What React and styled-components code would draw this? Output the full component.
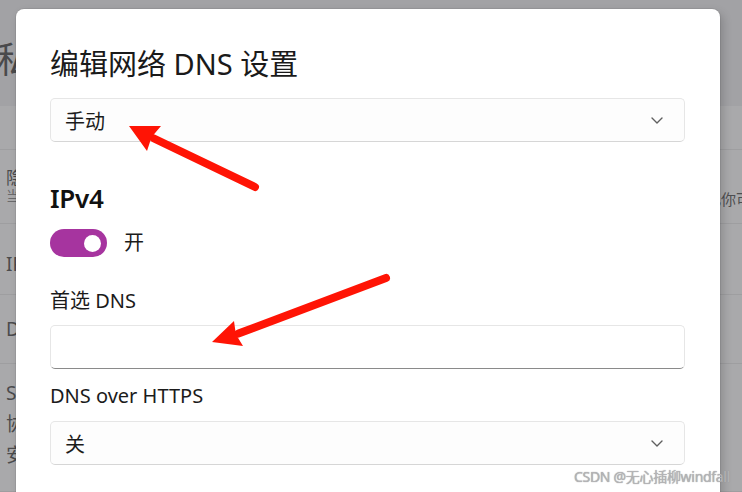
import React from 'react';
import styled, { createGlobalStyle } from 'styled-components';

const GlobalStyle = createGlobalStyle`
  html, body {
    margin: 0;
    padding: 0;
    background: #a3a3a5;
  }
  body {
    font-family: "Noto Sans", "Noto Sans CJK SC", sans-serif;
    color: #1b1b1b;
  }
`;

const Screen = styled.div`
  position: relative;
  width: 742px;
  height: 492px;
  overflow: hidden;
  background: #a2a2a5;
`;

/* settings page dimmed behind the dialog */
const Page = styled.div`
  display: flex;
  flex-direction: column;
  height: 100%;
`;

const PageHeader = styled.div`
  height: 107px;
  padding: 36px 0 0 0;
  box-sizing: border-box;
  font-size: 36px;
  line-height: 48px;
  color: #4a4a4c;
  margin-left: -4px;
`;

const Row = styled.div`
  display: flex;
  justify-content: space-between;
  align-items: ${(p) => p.$align || 'center'};
  height: ${(p) => p.$h}px;
  padding: ${(p) => p.$pt || 0}px 0 0 6px;
  box-sizing: border-box;
  background: #a9a9ab;
  border-bottom: 1px solid #9e9ea0;
`;

const RowText = styled.div`
  display: flex;
  flex-direction: column;
  gap: ${(p) => p.$gap || 0}px;
`;

const RowTitle = styled.span`
  font-family: "Noto Sans", "Noto Sans CJK SC", sans-serif;
  font-size: ${(p) => p.$size || 17}px;
  line-height: 1.2;
  color: #4b4b4d;
`;

const RowSub = styled.span`
  font-size: 14px;
  line-height: 1.2;
  color: #6a6a6c;
`;

const RowValue = styled.span`
  font-size: 15px;
  color: #4e4e50;
  margin: 20px -24px 0 0;
  white-space: nowrap;
`;

const Dialog = styled.div`
  position: absolute;
  left: 16px;
  top: 9px;
  width: 704px;
  height: 540px;
  background: #ffffff;
  border-radius: 8px;
  box-shadow: 0 0 0 1px rgba(0, 0, 0, 0.06), 3px 4px 10px rgba(0, 0, 0, 0.18);
  padding: 37px 35px 0 34px;
  box-sizing: border-box;
  display: flex;
  flex-direction: column;
`;

const Title = styled.h1`
  margin: 0;
  font-size: 29px;
  line-height: 36px;
  font-weight: 400;
  color: #1a1a1a;
`;

const Select = styled.div`
  display: flex;
  align-items: center;
  justify-content: space-between;
  height: 44px;
  margin-top: ${(p) => p.$mt}px;
  padding: 0 21px 0 14px;
  box-sizing: border-box;
  background: #fdfdfd;
  border: 1px solid #e6e6e6;
  border-bottom-color: #d6d6d6;
  border-radius: 5px;
  font-size: 20px;
  color: #1b1b1b;
`;

const Section = styled.h2`
  margin: 39px 0 0 0;
  font-size: 26px;
  line-height: 34px;
  font-weight: 600;
  letter-spacing: -0.3px;
  color: #111;
`;

const ToggleRow = styled.div`
  display: flex;
  align-items: center;
  gap: 17px;
  margin-top: 14px;
  font-size: 20px;
  line-height: 28px;
`;

const Toggle = styled.div`
  width: 57px;
  height: 28px;
  border-radius: 14px;
  background: #a6349f;
  display: flex;
  align-items: center;
  justify-content: flex-end;
  padding-right: 6px;
  box-sizing: border-box;
`;

const Knob = styled.div`
  width: 17px;
  height: 17px;
  border-radius: 50%;
  background: #fff;
`;

const Label = styled.div`
  margin-top: ${(p) => p.$mt}px;
  font-size: 20px;
  line-height: 28px;
  color: #1b1b1b;
`;

const Input = styled.div`
  height: 44px;
  margin-top: 10px;
  box-sizing: border-box;
  background: #fff;
  border: 1px solid #e6e6e6;
  border-bottom: 1px solid #8a8a8a;
  border-radius: 5px;
`;

const Overlay = styled.svg`
  position: absolute;
  left: 0;
  top: 0;
  pointer-events: none;
`;

const Watermark = styled.div`
  position: absolute;
  right: 12px;
  bottom: 6px;
  font-size: 14px;
  color: #b4b4b6;
  text-shadow: 0 0 1px #8e8e90;
  letter-spacing: -0.3px;
`;

function Chevron() {
  return (
    <svg width="12" height="7" viewBox="0 0 12 7" fill="none">
      <path d="M1 1l5 5 5-5" stroke="#5f5f5f" strokeWidth="1.4" strokeLinecap="round" strokeLinejoin="round" />
    </svg>
  );
}

function Arrow({ tail, tip, w1, w2, width }) {
  const base = [(w1[0] + w2[0]) / 2, (w1[1] + w2[1]) / 2];
  const notch = base.map((v, i) => v + (tip[i] - v) * 0.1);
  return (
    <g>
      <line
        x1={tail[0]}
        y1={tail[1]}
        x2={base[0]}
        y2={base[1]}
        stroke="#ff1405"
        strokeWidth={width}
        strokeLinecap="round"
      />
      <polygon points={`${tip.join(',')} ${w1.join(',')} ${notch.join(',')} ${w2.join(',')}`} fill="#ff1405" />
    </g>
  );
}

export default function App() {
  return (
    <>
      <GlobalStyle />
      <Screen>
        <Page>
          <PageHeader>私有网络</PageHeader>
          <Row $h={45} />
          <Row $h={75} $align="flex-start" $pt={18}>
            <RowText>
              <RowTitle>隐私</RowTitle>
              <RowSub>当前</RowSub>
            </RowText>
            <RowValue>允你可以</RowValue>
          </Row>
          <Row $h={73} $pt={10}>
            <RowTitle $size={19}>IP</RowTitle>
          </Row>
          <Row $h={70}>
            <RowTitle $size={19}>DNS</RowTitle>
          </Row>
          <Row $h={130} $align="flex-start" $pt={18}>
            <RowText $gap={8}>
              <RowTitle $size={19}>SSID</RowTitle>
              <RowTitle $size={19}>协议</RowTitle>
              <RowTitle $size={19}>安全</RowTitle>
            </RowText>
          </Row>
        </Page>

        <Dialog>
          <Title>编辑网络 DNS 设置</Title>
          <Select $mt={16}>
            <span>手动</span>
            <Chevron />
          </Select>

          <Section>IPv4</Section>
          <ToggleRow>
            <Toggle>
              <Knob />
            </Toggle>
            <span>开</span>
          </ToggleRow>

          <Label $mt={30}>首选 DNS</Label>
          <Input />

          <Label $mt={13}>DNS over HTTPS</Label>
          <Select $mt={11}>
            <span>关</span>
            <Chevron />
          </Select>
        </Dialog>

        <Overlay width="742" height="492" viewBox="0 0 742 492">
          <Arrow tail={[255, 187]} tip={[129, 126]} w1={[161, 126]} w2={[147, 151]} width={8} />
          <Arrow tail={[386, 278]} tip={[212, 342]} w1={[234, 321]} w2={[243, 346]} width={8} />
        </Overlay>

        <Watermark>CSDN @无心插柳windfall</Watermark>
      </Screen>
    </>
  );
}
